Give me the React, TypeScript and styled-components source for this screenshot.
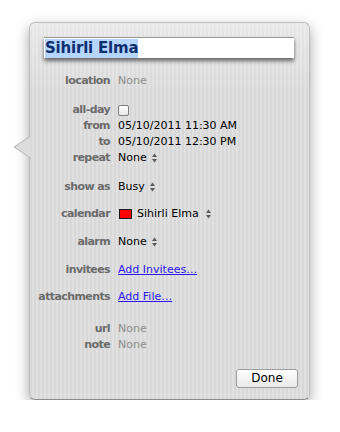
import styled, { createGlobalStyle } from "styled-components";

const GlobalStyle = createGlobalStyle`
  body {
    margin: 0;
    background: #ffffff;
    font-family: "DejaVu Sans", Verdana, sans-serif;
  }
`;

const Page = styled.div`
  padding: 22px 0 0 29px;
`;

const Popover = styled.div`
  position: relative;
  width: 281px;
  box-sizing: border-box;
  border: 1px solid #bdbdbd;
  border-bottom-color: #8c8c8c;
  border-radius: 6px;
  background:
    linear-gradient(rgba(255, 255, 255, 0.4), rgba(255, 255, 255, 0) 70px),
    repeating-linear-gradient(90deg, #d8d8d8 0 2px, #e0e0e0 2px 4px);
  box-shadow: 0 5px 14px rgba(0, 0, 0, 0.35);
  padding: 14px 0 11px 0;
`;

const Arrow = styled.svg`
  position: absolute;
  left: -17px;
  top: 112px;
  overflow: visible;
`;

const TitleField = styled.div`
  margin: 0 15px 0 14px;
  height: 21px;
  background: #ffffff;
  box-sizing: border-box;
  border-top: 1px solid #9a9a9a;
  box-shadow: 0 3px 4px rgba(0, 0, 0, 0.55);
  padding-left: 1px;
`;

const Selected = styled.span`
  display: inline-block;
  background: #b5d5ff;
  color: #0c2e6e;
  font-weight: bold;
  font-size: 15px;
  line-height: 19px;
  letter-spacing: -0.2px;
`;

const Row = styled.div<{ $space?: number }>`
  display: grid;
  grid-template-columns: 80px 1fr;
  column-gap: 8px;
  height: 16px;
  line-height: 16px;
  align-items: center;
  font-size: 11px;
  margin-top: ${(p) => p.$space ?? 0}px;
`;

const Label = styled.span`
  text-align: right;
  color: #6b6b6b;
  font-weight: bold;
  letter-spacing: -0.6px;
  white-space: nowrap;
`;

const Value = styled.span<{ $muted?: boolean }>`
  display: flex;
  align-items: center;
  color: ${(p) => (p.$muted ? "#8c8c8c" : "#000000")};
  white-space: nowrap;
`;

const Link = styled.a`
  color: #2d16f5;
  text-decoration: underline;
  cursor: pointer;
`;

const Checkbox = styled.span`
  display: inline-block;
  width: 9px;
  height: 9px;
  border: 1px solid #7d7d7d;
  border-radius: 2px;
  background: linear-gradient(#ffffff, #e8e8e8);
`;

const Swatch = styled.span`
  display: inline-block;
  width: 11px;
  height: 8px;
  background: #ff0000;
  border: 1px solid #1a1a1a;
  margin: 0 5px 0 1px;
`;

const Stepper = styled.svg<{ $gap?: number }>`
  margin-left: ${(p) => p.$gap ?? 5}px;
`;

const Footer = styled.div`
  display: flex;
  justify-content: flex-end;
  padding-right: 11px;
  margin-top: 16px;
`;

const Button = styled.button`
  width: 62px;
  height: 19px;
  padding: 0;
  border: 1px solid #9c9c9c;
  border-radius: 3px;
  background: linear-gradient(#ffffff, #f4f4f4 50%, #e9e9e9);
  font-family: "DejaVu Sans", Verdana, sans-serif;
  font-size: 12px;
  line-height: 17px;
  color: #000000;
`;

function Arrows({ gap }: { gap?: number }) {
  return (
    <Stepper $gap={gap} width="5" height="10" viewBox="0 0 5 10">
      <path d="M2.5 0.5 L5 4 L0 4 Z" fill="#5a5a5a" />
      <path d="M0 6 L5 6 L2.5 9.5 Z" fill="#5a5a5a" />
    </Stepper>
  );
}

export default function App() {
  return (
    <Page>
      <GlobalStyle />
      <Popover>
        <Arrow width="18" height="24" viewBox="0 0 18 24">
          <path d="M18 1 L1 12 L18 23 Z" fill="#dcdcdc" stroke="none" />
          <path d="M17.5 1 L1 12 L17.5 23" fill="none" stroke="#b4b4b4" strokeWidth="1" />
        </Arrow>
        <TitleField>
          <Selected>Sihirli Elma</Selected>
        </TitleField>

        <Row $space={15}>
          <Label>location</Label>
          <Value $muted>None</Value>
        </Row>

        <Row $space={13}>
          <Label>all-day</Label>
          <Value>
            <Checkbox />
          </Value>
        </Row>
        <Row>
          <Label>from</Label>
          <Value>05/10/2011 11:30 AM</Value>
        </Row>
        <Row>
          <Label>to</Label>
          <Value>05/10/2011 12:30 PM</Value>
        </Row>
        <Row>
          <Label>repeat</Label>
          <Value>
            None
            <Arrows />
          </Value>
        </Row>

        <Row $space={13}>
          <Label>show as</Label>
          <Value>
            Busy
            <Arrows />
          </Value>
        </Row>

        <Row $space={11}>
          <Label>calendar</Label>
          <Value>
            <Swatch />
            Sihirli Elma
            <Arrows gap={7} />
          </Value>
        </Row>

        <Row $space={12}>
          <Label>alarm</Label>
          <Value>
            None
            <Arrows />
          </Value>
        </Row>

        <Row $space={12}>
          <Label>invitees</Label>
          <Value>
            <Link>Add Invitees…</Link>
          </Value>
        </Row>

        <Row $space={11}>
          <Label>attachments</Label>
          <Value>
            <Link>Add File…</Link>
          </Value>
        </Row>

        <Row $space={16}>
          <Label>url</Label>
          <Value $muted>None</Value>
        </Row>
        <Row>
          <Label>note</Label>
          <Value $muted>None</Value>
        </Row>

        <Footer>
          <Button>Done</Button>
        </Footer>
      </Popover>
    </Page>
  );
}
